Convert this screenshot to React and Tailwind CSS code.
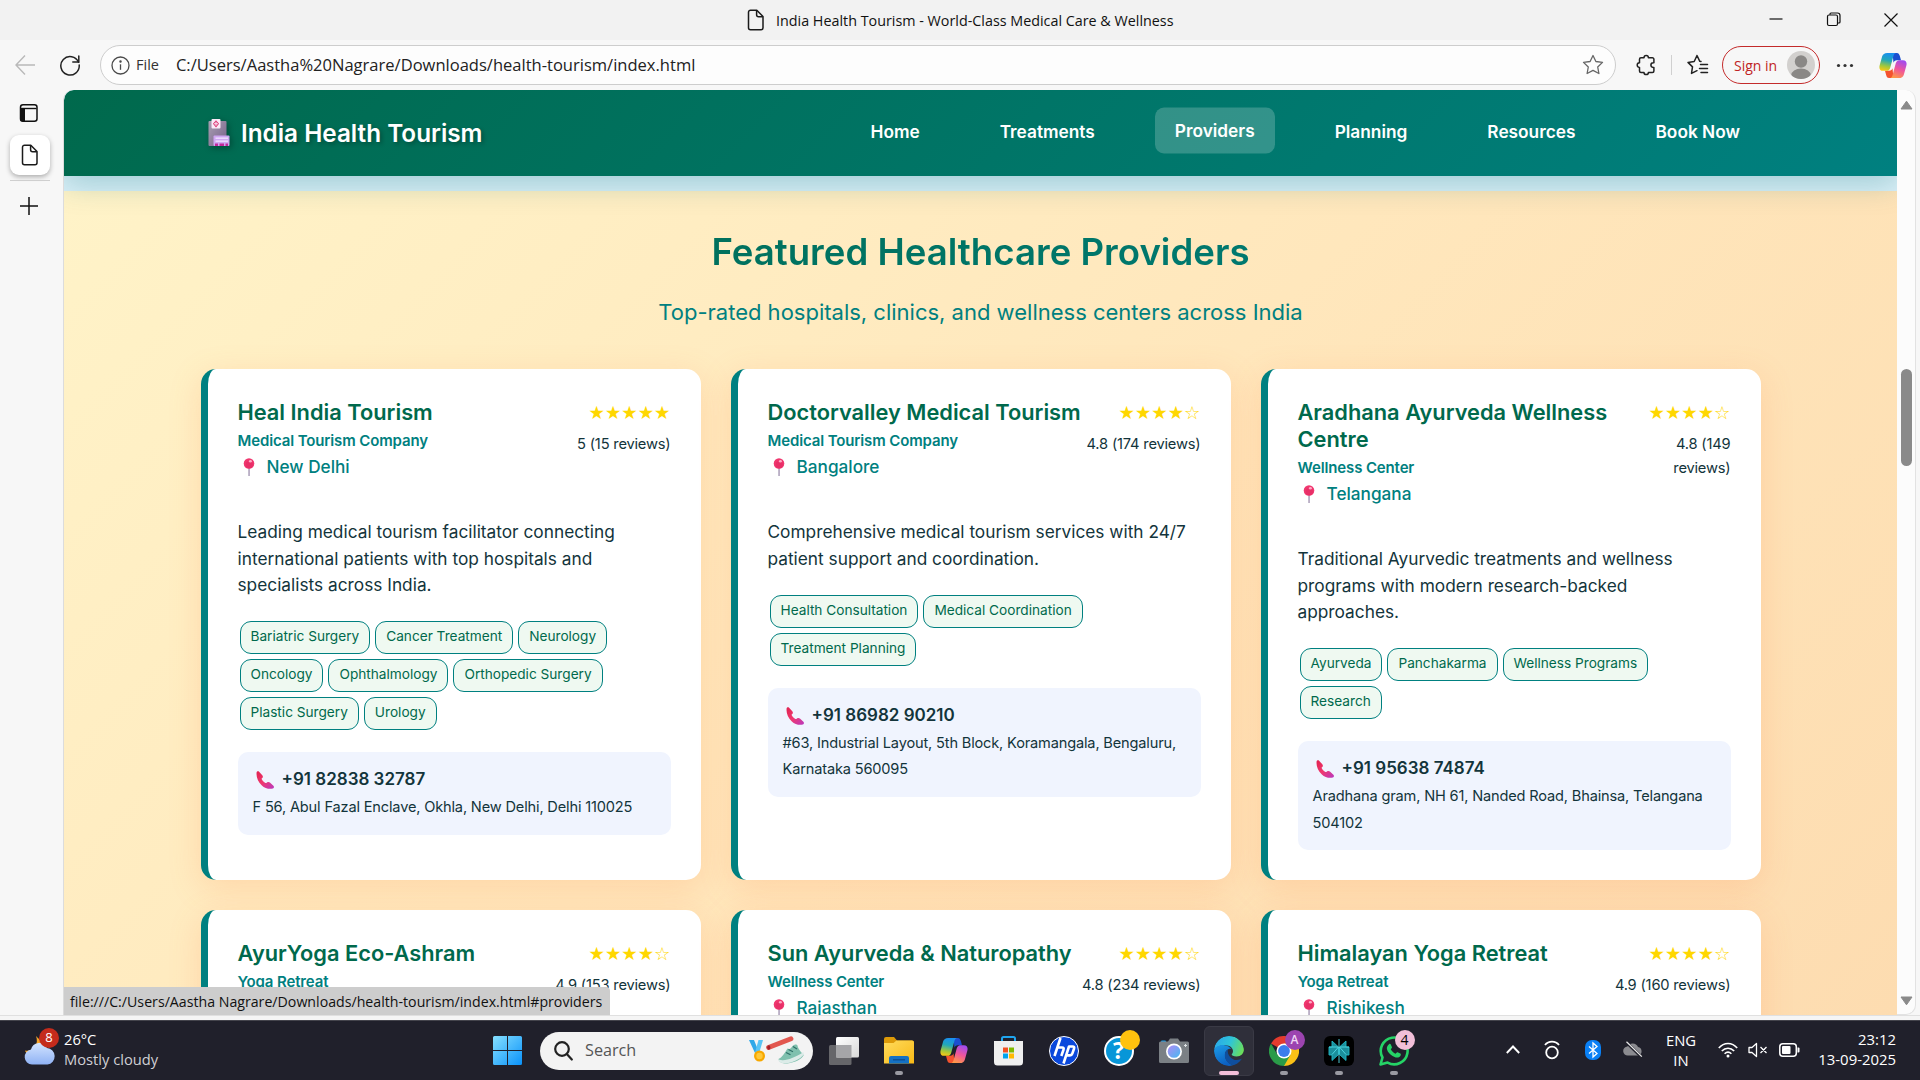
import React from "react";

const INTER = "font-['Inter',sans-serif]";
const UI = "font-['Open_Sans',sans-serif]";

/* ---------- small icons ---------- */

const PageIcon = ({ className = "" }) => (
  <svg className={className} width="18" height="22" viewBox="0 0 18 22" fill="none" stroke="#1b1b1b" strokeWidth="1.5" strokeLinejoin="round">
    <path d="M3.5 1.2h6.3L16 7.6v11.2a2 2 0 0 1-2 2H3.5a2 2 0 0 1-2-2V3.200a2 2 0 0 1 2-2z" />
    <path d="M9.600 1.400v4.400a2 2 0 0 0 2 2h4.200" />
  </svg>
);

const Pin = () => (
  <svg width="12" height="18" viewBox="0 0 12 18" className="ml-[5px] mr-[12px] shrink-0">
    <rect x="5.400" y="9" width="1.300" height="9" fill="#9d8fae" />
    <circle cx="6" cy="5.500" r="5.300" fill="#f0376f" />
    <circle cx="6.200" cy="6.600" r="3.600" fill="#e32a63" opacity=".6" />
    <ellipse cx="7.400" cy="3.200" rx="1.500" ry="1.200" fill="#ffa9c4" />
  </svg>
);

const Phone = () => (
  <svg width="18" height="18" viewBox="0 0 18 18" className="ml-[3px] mr-2 shrink-0">
    <defs>
      <linearGradient id="ph" x1="0" y1="0" x2="1" y2="1">
        <stop offset="0" stopColor="#e0214f" />
        <stop offset=".5" stopColor="#f0386f" />
        <stop offset="1" stopColor="#b838c0" />
      </linearGradient>
    </defs>
    <path d="M.6 1.600C.7.3 2.200-.2 3.100.7L6.300 4.300c.9 1 .7 1.900 0 2.600l-.6.700c-.2.500.3 1.400 1.500 2.700s2.500 2 3.100 1.700l1-.7c.8-.6 1.900-.4 2.600.200l3.500 3.200c.9.900.6 2.300-.6 2.700-2.900 1-7.700.3-11.200-3.200C2 10.900.100 5.800.600 1.600z" fill="url(#ph)" />
  </svg>
);

const Hospital = () => (
  <svg width="23" height="28" viewBox="0 0 23 28" className="mr-[10px] drop-shadow-[2px_2px_3px_rgba(0,0,0,0.3)]">
    <defs>
      <linearGradient id="hb" x1="0" y1="0" x2="1" y2="1">
        <stop offset="0" stopColor="#a9a0b2" />
        <stop offset="1" stopColor="#76608a" />
      </linearGradient>
    </defs>
    <rect x=".5" y="2" width="18" height="25" rx="1" fill="url(#hb)" />
    <rect x="3.500" y="0" width="9" height="9.500" rx="1" fill="#fbeaf8" />
    <path d="M8 1.200l3 3.600-3 3.600-3-3.600z" fill="#d92f6d" />
    <path d="M8 2.800v4M6 4.800h4" stroke="#fbeaf8" strokeWidth="1" />
    <rect x="5.500" y="16.500" width="16" height="10.500" rx="1" fill="#cfa6f2" />
    <rect x="7.500" y="18.500" width="12.500" height="1.300" fill="#f0e4ff" />
    <rect x="7.500" y="21.500" width="12.500" height="1.300" fill="#f0e4ff" />
    <rect x="7" y="24.500" width="3" height="2.500" fill="#c2289a" />
    <rect x="11.500" y="24.500" width="4.500" height="2.500" fill="#c2289a" />
    <rect x="17.500" y="24.500" width="2.500" height="2.500" fill="#c2289a" />
  </svg>
);

const Copilot = ({ id }) => (
  <svg width="28" height="27" viewBox="0 0 29 27">
    <defs>
      <linearGradient id={id + "a"} x1=".5" y1="0" x2=".3" y2="1">
        <stop offset="0" stopColor="#1a8ff0" />
        <stop offset=".4" stopColor="#22a8b8" />
        <stop offset=".75" stopColor="#a3c83a" />
        <stop offset="1" stopColor="#f8c815" />
      </linearGradient>
      <linearGradient id={id + "b"} x1=".7" y1="0" x2=".3" y2="1">
        <stop offset="0" stopColor="#a04bf0" />
        <stop offset=".5" stopColor="#f0569a" />
        <stop offset="1" stopColor="#ff9a45" />
      </linearGradient>
    </defs>
    <path d="M14 .5h4.500c2 0 2.600 1.500 3.100 3.200l1.200 4.300h-4.300c-2 0-3 1-3.500 2.600z" fill="#1c4fd0" />
    <path d="M15 26.500h-4.500c-2 0-2.600-1.500-3.100-3.200L6.200 19h4.300c2 0 3-1 3.500-2.600z" fill="#f4522e" />
    <path d="M8.500.5H18c-1.600 0-2.500 1.200-3 3l-3.300 12c-.6 2.200-1.700 3.500-4 3.500H4.200C1 19-.2 16.500.7 13.200L3.300 4C4 1.800 5.700.5 8.500.5z" fill={`url(#${id}a)`} />
    <path d="M20.500 26.500H11c1.600 0 2.500-1.200 3-3l3.300-12c.6-2.200 1.700-3.500 4-3.500h3.500c3.200 0 4.400 2.500 3.500 5.800L25.700 23c-.7 2.200-2.400 3.500-5.200 3.500z" fill={`url(#${id}b)`} />
  </svg>
);

/* ---------- browser chrome ---------- */

function TitleBar() {
  return (
    <div className={`${UI} flex h-10 shrink-0 items-center bg-[#f2f2f2] text-[14.33px] text-[#111]`}>
      <div className="flex flex-1 items-center pl-[747px]">
        <PageIcon />
        <span className="ml-[11px] whitespace-nowrap pt-[2px]">India Health Tourism - World-Class Medical Care &amp; Wellness</span>
      </div>
      <svg width="151" height="40" viewBox="0 0 151 40" fill="none" stroke="#111" strokeWidth="1.200">
        <path d="M.5 19h13" />
        <rect x="58.500" y="15" width="10" height="10.500" rx="1.500" />
        <path d="M61 14.800V14a1 1 0 0 1 1-1h6.500a2.500 2.500 0 0 1 2.500 2.500V22a1 1 0 0 1-1 1h-1" />
        <path d="M115.500 13.500l13 13M128.500 13.500l-13 13" />
      </svg>
    </div>
  );
}

function Toolbar() {
  return (
    <div className={`${UI} flex h-[50px] shrink-0 items-center bg-[#f7f7f7]`}>
      <svg className="ml-[15px]" width="21" height="22" viewBox="0 0 21 22" fill="none" stroke="#b9b9b9" strokeWidth="1.400">
        <path d="M20 11H1M10 1.500L1 11l9 9.500" />
      </svg>
      <svg className="ml-[23px]" width="22" height="22" viewBox="0 0 22 22" fill="none" stroke="#222" strokeWidth="1.500" strokeLinecap="round">
        <path d="M19.500 8.200A9.200 9.200 0 1 0 20.200 11" />
        <path d="M19.800 2v6h-6" />
      </svg>
      <div className="ml-[19px] flex h-10 w-[1516px] items-center rounded-full border border-[#cdcdcd] bg-[#fdfdfd] pl-[10px] pr-[11px]">
        <svg width="19" height="19" viewBox="0 0 19 19" fill="none" stroke="#4a4a4a" strokeWidth="1.300">
          <circle cx="9.500" cy="9.500" r="8.500" />
          <path d="M9.500 8.300v5.500" />
          <circle cx="9.500" cy="5.600" r=".6" fill="#4a4a4a" />
        </svg>
        <span className="ml-[6px] text-[14.5px] text-[#333]">File</span>
        <span className="ml-[17px] flex-1 whitespace-nowrap text-[16.55px] text-[#222]">C:/Users/Aastha%20Nagrare/Downloads/health-tourism/index.html</span>
        <svg width="22" height="22" viewBox="0 0 22 22" fill="none" stroke="#666" strokeWidth="1.300" strokeLinejoin="round">
          <path d="M11 1.500l2.900 6 6.600.9-4.800 4.600 1.200 6.500-5.900-3.100-5.900 3.100 1.200-6.500L1.500 8.400l6.600-.9z" />
        </svg>
      </div>
      <svg className="ml-5" width="20" height="22" viewBox="0 0 20 22" fill="none" stroke="#222" strokeWidth="1.500" strokeLinejoin="round">
        <path d="M8 3.800a2.200 2.200 0 0 1 4.400 0h4a1.500 1.500 0 0 1 1.500 1.500v3.500h-.7a2.300 2.300 0 0 0 0 4.600h.7v3.500a1.500 1.500 0 0 1-1.500 1.500h-4a2.200 2.200 0 0 1-4.400 0H5a1.500 1.500 0 0 1-1.500-1.500v-3.500a2.300 2.300 0 0 1 0-4.600V5.300A1.500 1.500 0 0 1 5 3.800z" />
      </svg>
      <div className="ml-[15px] h-5 w-px bg-[#d0d0d0]" />
      <svg className="ml-[15px]" width="22" height="22" viewBox="0 0 22 22" fill="none" stroke="#222" strokeWidth="1.500" strokeLinejoin="round" strokeLinecap="round">
        <path d="M14 7.500l-1.200-.2L10 1.500 7.200 7.500l-6.200.9 4.500 4.500-1 6.500L10 16.700" />
        <path d="M13.500 10.500h7M12.500 14.500h8M14 18.500h6.500" />
      </svg>
      <div className="ml-[13px] flex h-[38px] w-[98px] items-center justify-between rounded-full border-[1.500px] border-[#c42b2b] pl-[11px] pr-1">
        <span className="whitespace-nowrap text-[14px] text-[#c02424]">Sign in</span>
        <svg width="28" height="28" viewBox="0 0 28 28">
          <defs>
            <clipPath id="av"><circle cx="14" cy="14" r="14" /></clipPath>
          </defs>
          <g clipPath="url(#av)">
            <rect width="28" height="28" fill="#d2d0ce" />
            <circle cx="14" cy="10.500" r="6.200" fill="#8a8886" />
            <ellipse cx="14" cy="24" rx="9.700" ry="6.500" fill="#8a8886" />
          </g>
        </svg>
      </div>
      <svg className="ml-4" width="18" height="5" viewBox="0 0 18 5" fill="#333">
        <circle cx="2.500" cy="2.500" r="1.600" /><circle cx="9" cy="2.500" r="1.600" /><circle cx="15.500" cy="2.500" r="1.600" />
      </svg>
      <div className="ml-[25px]"><Copilot id="ct" /></div>
    </div>
  );
}

function SideTabs() {
  return (
    <div className="flex w-[63px] shrink-0 flex-col items-start bg-[#f7f7f7] pl-[10px]">
      <svg className="ml-[9px] mt-[14px]" width="20" height="18" viewBox="0 0 20 18">
        <rect x="1.500" y=".8" width="16.500" height="16.400" rx="2.500" fill="none" stroke="#111" strokeWidth="1.500" />
        <path d="M1.500 4.500h16" stroke="#111" strokeWidth="1.400" />
        <path d="M1 4.500h5v13H4a3 3 0 0 1-3-3z" fill="#111" />
      </svg>
      <div className="mt-[13px] flex h-10 w-10 items-center justify-center rounded-[9px] bg-white shadow-[0_2px_5px_rgba(0,0,0,0.3)]"><PageIcon /></div>
      <div className="mt-[5px] h-px w-10 bg-[#cfcfcf]" />
      <svg className="ml-[10px] mt-4" width="18" height="18" viewBox="0 0 18 18" stroke="#111" strokeWidth="1.500">
        <path d="M9 0v18M0 9h18" />
      </svg>
    </div>
  );
}

function Scrollbar() {
  return (
    <div className="flex w-[19px] shrink-0 flex-col items-center rounded-r-[10px] border-b border-r border-[#e2e2e2] bg-[#fcfcfc] pt-[10px]">
      <svg width="13" height="10" viewBox="0 0 13 10"><path d="M6.500 1.200L12 9H1z" fill="#8a8a8a" stroke="#8a8a8a" strokeLinejoin="round" /></svg>
      <div className="mt-[259px] h-[97px] w-[11px] rounded-full bg-[#8a8a8a]" />
      <svg className="mt-[530px]" width="13" height="10" viewBox="0 0 13 10"><path d="M6.500 8.800L12 1H1z" fill="#8a8a8a" stroke="#8a8a8a" strokeLinejoin="round" /></svg>
    </div>
  );
}

/* ---------- site ---------- */

const NAV = ["Home", "Treatments", "Providers", "Planning", "Resources", "Book Now"];

function SiteHeader() {
  return (
    <header className="relative z-10 flex h-[86px] shrink-0 items-center justify-between rounded-tl-[10px] bg-linear-135 from-[#00694c] to-[#008080] pl-[144px] pr-[137px] text-white shadow-[0_8px_30px_rgba(0,110,110,0.26)]">
      <div className="flex items-center">
        <Hospital />
        <span className="text-[24.3px] font-semibold [text-shadow:2px_2px_4px_rgba(0,0,0,0.3)]">India Health Tourism</span>
      </div>
      <nav className="flex gap-10">
        {NAV.map((n) => (
          <a key={n} className={n === "Providers" ? "flex h-[46px] -translate-y-[2.5px] items-center rounded-[9px] bg-white/20 px-5 pb-px text-[17.3px] font-semibold" : "flex h-[46px] -translate-y-px items-center px-5 text-[17.3px] font-semibold"}>{n}</a>
        ))}
      </nav>
    </header>
  );
}

const CARDS = [
  {
    name: "Heal India Tourism", type: "Medical Tourism Company", loc: "New Delhi", stars: "★★★★★", rating: "5 (15 reviews)",
    desc: ["Leading medical tourism facilitator connecting", "international patients with top hospitals and", "specialists across India."],
    tags: ["Bariatric Surgery", "Cancer Treatment", "Neurology", "Oncology", "Ophthalmology", "Orthopedic Surgery", "Plastic Surgery", "Urology"],
    phone: "+91 82838 32787", addr: ["F 56, Abul Fazal Enclave, Okhla, New Delhi, Delhi 110025"],
  },
  {
    name: "Doctorvalley Medical Tourism", type: "Medical Tourism Company", loc: "Bangalore", stars: "★★★★☆", rating: "4.8 (174 reviews)",
    desc: ["Comprehensive medical tourism services with 24/7", "patient support and coordination."],
    tags: ["Health Consultation", "Medical Coordination", "Treatment Planning"],
    phone: "+91 86982 90210", addr: ["#63, Industrial Layout, 5th Block, Koramangala, Bengaluru,", "Karnataka 560095"],
  },
  {
    name: "Aradhana Ayurveda Wellness Centre", type: "Wellness Center", loc: "Telangana", stars: "★★★★☆", rating: "4.8 (149 reviews)", narrow: true,
    desc: ["Traditional Ayurvedic treatments and wellness", "programs with modern research-backed", "approaches."],
    tags: ["Ayurveda", "Panchakarma", "Wellness Programs", "Research"],
    phone: "+91 95638 74874", addr: ["Aradhana gram, NH 61, Nanded Road, Bhainsa, Telangana", "504102"],
  },
  { name: "AyurYoga Eco-Ashram", type: "Yoga Retreat", stars: "★★★★☆", rating: "4.9 (153 reviews)" },
  { name: "Sun Ayurveda & Naturopathy", type: "Wellness Center", loc: "Rajasthan", stars: "★★★★☆", rating: "4.8 (234 reviews)" },
  { name: "Himalayan Yoga Retreat", type: "Yoga Retreat", loc: "Rishikesh", stars: "★★★★☆", rating: "4.9 (160 reviews)" },
];

function Card({ c }) {
  return (
    <article className="h-[511px] rounded-[15px] border-l-[7px] border-[#008080] bg-white px-[30px] pt-[30px] text-[#13343b] shadow-[0_8px_32px_rgba(255,140,80,0.22)]">
      <div className="flex items-start justify-between">
        <div className={c.narrow ? "w-[330px]" : ""}>
          <h3 className="text-[21.8px] font-semibold leading-[27px] text-[#00694c]">{c.name}</h3>
          <div className="pt-[1px] text-[15px] font-semibold leading-[28px] tracking-[-0.13px] text-[#008080]">{c.type}</div>
          {c.loc && (
            <div className="-mt-[1px] flex h-[26px] items-center text-[17.2px] font-medium text-[#008080]">
              <Pin />
              <span>{c.loc}</span>
            </div>
          )}
        </div>
        <div className={c.narrow ? "w-[84px] text-right" : "text-right"}>
          <div className="h-[34px] whitespace-nowrap font-['DejaVu_Sans',sans-serif] text-[18.300px] leading-[28px] text-[#ffd700]">{c.stars}</div>
          <div className="text-[14.7px] leading-[23.500px] tracking-[-0.2px]">{c.rating}</div>
        </div>
      </div>
      {c.desc && (
        <>
          <div className="mt-[39px] text-[17.3px] leading-[26.500px]">
            {c.desc.map((d) => <div key={d} className="whitespace-nowrap">{d}</div>)}
          </div>
          <div className="mt-[22.500px] flex flex-wrap gap-[5px] pl-[2px] pr-[45px]">
            {c.tags.map((t) => (
              <span key={t} className="flex h-[33px] items-center rounded-[11px] border border-[#008080] bg-[#eff9f1] px-[10px] pb-[2px] text-[13.650px] text-[#00694c]">{t}</span>
            ))}
          </div>
          <div className="mt-[22px] rounded-[10px] bg-[#f0f4fe] px-[15px] py-[14px]">
            <div className="flex h-[28px] items-center text-[17px] font-semibold">
              <Phone />
              <span>{c.phone}</span>
            </div>
            {c.addr.map((a) => <div key={a} className="whitespace-nowrap text-[14.580px] leading-[26.600px] tracking-[-0.16px]">{a}</div>)}
          </div>
        </>
      )}
    </article>
  );
}

function Site() {
  return (
    <div className={`${INTER} relative flex h-[925px] w-[1834px] shrink-0 flex-col overflow-hidden border-l border-[#dcdcdc] rounded-tl-[10px] bg-[#d9eff8]`}>
      <SiteHeader />
      <section className="mt-[15px] flex h-[824px] shrink-0 flex-col items-center bg-linear-135 from-[#fff3c8] via-[#ffe7bc] to-[#fddcb0] pt-[38px]">
        <h2 className="bg-linear-135 from-[#00694c] to-[#008080] bg-clip-text px-[510px] text-[36.600px] font-semibold leading-[46px] text-transparent">Featured Healthcare Providers</h2>
        <p className="mt-[21px] text-[22px] leading-[33px] text-[#008080]">Top-rated hospitals, clinics, and wellness centers across India</p>
        <div className="mt-10 grid w-[1560px] grid-cols-[500px_500px_500px] gap-[30px]">
          {CARDS.map((c) => <Card key={c.name} c={c} />)}
        </div>
      </section>
      <div className={`${UI} absolute bottom-0 left-0 z-20 flex h-7 w-[546px] items-center rounded-tr-[4px] bg-[#cdcdcd] pl-[6px] pt-[2px] text-[14.180px] text-[#111]`}>
        <span className="whitespace-nowrap">file:///C:/Users/Aastha Nagrare/Downloads/health-tourism/index.html#providers</span>
      </div>
    </div>
  );
}

/* ---------- taskbar ---------- */

const Badge = ({ className, children }) => (
  <span className={`absolute flex items-center justify-center rounded-full ${className}`}>{children}</span>
);

function AppCell({ children, dot, active }) {
  return (
    <div className="flex h-[60px] w-[55px] items-center justify-center">
      <div className={active ? "relative flex h-[50px] w-[50px] items-center justify-center rounded-md border border-[#3a3a45] bg-[#2f2f3a]" : "relative flex h-[50px] w-[50px] items-center justify-center"}>
        {children}
        {dot && <span className="absolute bottom-[1px] h-1 w-2 rounded-full bg-[#9a9aa2]" />}
        {active && <span className="absolute bottom-0 h-1 w-5 rounded-full bg-[#f2bfd9]" />}
      </div>
    </div>
  );
}

function Taskbar() {
  return (
    <div className={`${UI} flex h-[60px] shrink-0 items-center border-t border-[#44444c] bg-[#20202b] text-white`}>
      <div className="relative ml-[24px] h-[48px] w-[36px]">
        <svg className="mt-[8px]" width="34" height="38" viewBox="0 0 34 38">
          <defs>
            <linearGradient id="cl" x1="0" y1="0" x2="0" y2="1">
              <stop offset="0" stopColor="#d3e4ff" />
              <stop offset="1" stopColor="#8fb2f5" />
            </linearGradient>
          </defs>
          <path d="M12 1c3 8-2 16-11 14.500C3 21 9 23 14 21s8-6 7-11z" fill="#f4a52a" />
          <path d="M8 35.500a7.500 7.500 0 0 1-1-14.900 8.500 8.500 0 0 1 16-1.600 8.300 8.300 0 0 1 .5 16.500z" transform="translate(0 -6)" fill="url(#cl)" />
        </svg>
        <Badge className="left-[15px] top-[1px] h-5 w-5 bg-[#c42b1c] text-[13px] leading-none">8</Badge>
      </div>
      <div className="ml-[4px] w-[429px] pb-[3px] text-[14.7px] leading-[20px]">
        <div>26°C</div>
        <div className="text-[#cfcfd4]">Mostly cloudy</div>
      </div>
      <svg width="29" height="29" viewBox="0 0 29 29">
        <defs>
          <linearGradient id="wn" x1="0" y1="0" x2="1" y2="1">
            <stop offset="0" stopColor="#86e0ff" />
            <stop offset="1" stopColor="#0a92fa" />
          </linearGradient>
        </defs>
        <path d="M1.500 0H14v14H0V1.500A1.500 1.500 0 0 1 1.500 0zM15 0h12.500A1.500 1.500 0 0 1 29 1.500V14H15zM0 15h14v14H1.500A1.500 1.500 0 0 1 0 27.500zM15 15h14v12.500a1.500 1.500 0 0 1-1.500 1.500H15z" fill="url(#wn)" />
      </svg>
      <div className="ml-[18px] flex h-[38px] w-[273px] items-center rounded-full bg-[#f3f3f3] pl-[14px] pr-2">
        <svg width="19" height="20" viewBox="0 0 19 20" fill="none" stroke="#222" strokeWidth="2.200">
          <circle cx="8" cy="8" r="6.800" />
          <path d="M12.800 13l5 5.500" strokeLinecap="round" />
        </svg>
        <span className="ml-3 flex-1 text-[16.2px] text-[#555]">Search</span>
        <svg width="56" height="30" viewBox="0 0 56 30">
          <path d="M0 4h5l4 10-3 3z" fill="#2fa8e8" /><path d="M14 4H9.500L6 16.500l4 1z" fill="#58c4f5" />
          <circle cx="10.500" cy="20" r="5.500" fill="#f7a800" /><circle cx="10.500" cy="20" r="3.200" fill="#ffc93a" />
          <path d="M19.500 11.500L42 2.800" stroke="#e2574f" strokeWidth="4.800" strokeLinecap="round" /><ellipse cx="19.800" cy="11.500" rx="1.600" ry="2.300" fill="#a3222b" />
          <path d="M29.500 23c3.500-1.500 6-5.500 9-10.500 1.500.8 2.500.5 3.500-.5 1.300-1.200 2-3.500 5-3.500 1.200 0 1.800 1 1.800 2.500 1.200 3 3.200 5 6 8-2 4-8.500 7.500-16.500 8.500-4 .3-8-.5-8.800-4.500z" fill="#7fc0ae" />
          <path d="M29.500 23.500c4 1.500 9 .5 13.500-1.500 5-2 9-4 11.300-6l.5 2.500c-4 5-11 8.300-18.300 8.800-4 .2-7.300-1-7-3.800z" fill="#dcebe8" />
          <path d="M37 16.500l4.500 2.300M39.500 13.500l4.500 2.300M44 10.500l4 2.500" stroke="#2f6f68" strokeWidth="1.200" />
        </svg>
      </div>
      <div className="ml-[3px] flex">
        <AppCell>
          <svg width="30" height="28" viewBox="0 0 30 28">
            <defs><linearGradient id="tv" x1="0" y1="0" x2="1" y2="1"><stop offset="0" stopColor="#fff" /><stop offset="1" stopColor="#d8d8d8" /></linearGradient></defs>
            <rect x="0" y="8" width="22.500" height="20" rx="1.500" fill="#66666a" />
            <rect x="7" y="0" width="23" height="20.500" rx="1.500" fill="url(#tv)" />
            <rect x="7" y="8" width="15.500" height="12.500" fill="#a5a5a8" />
          </svg>
        </AppCell>
        <AppCell dot>
          <svg width="30" height="27" viewBox="0 0 30 27">
            <defs><linearGradient id="fd" x1="0" y1="0" x2="1" y2="1"><stop offset="0" stopColor="#ffdb5c" /><stop offset="1" stopColor="#f8b916" /></linearGradient></defs>
            <path d="M0 2a2 2 0 0 1 2-2h8l3 3.500h15a2 2 0 0 1 2 2V10H0z" fill="#dd9a08" />
            <path d="M0 6h9.500l3-2.500H28a2 2 0 0 1 2 2V26.500H0z" fill="url(#fd)" />
            <path d="M5 26.500V21a2 2 0 0 1 2-2h16a2 2 0 0 1 2 2v5.500z" fill="#1471c4" />
            <path d="M9 22.800h12" stroke="#0a4a8c" strokeWidth="1.200" />
          </svg>
        </AppCell>
        <AppCell><Copilot id="cb" /></AppCell>
        <AppCell>
          <svg width="29" height="30" viewBox="0 0 29 30">
            <path d="M8 6V2.500A1.500 1.500 0 0 1 9.500 1h10A1.500 1.500 0 0 1 21 2.500V6" fill="none" stroke="#1fa5ef" strokeWidth="2" />
            <path d="M0 5h29v21a3.500 3.500 0 0 1-3.500 3.500h-22A3.500 3.500 0 0 1 0 26z" fill="#efefef" />
            <path d="M9 11.500h5v5H9z" fill="#f25022" /><path d="M15 11.500h5v5h-5z" fill="#7fba00" /><path d="M9 17.500h5v5H9z" fill="#00a4ef" /><path d="M15 17.500h5v5h-5z" fill="#ffb900" />
          </svg>
        </AppCell>
        <AppCell>
          <div className="flex h-[30px] w-[30px] items-center justify-center rounded-full border-[1.500px] border-white bg-[#0a48dc]">
            <svg width="24" height="27" viewBox="0 0 24 27" fill="none" stroke="#fff" strokeWidth="2.600" strokeLinejoin="round">
              <path d="M8.500 1L2.500 19M5.500 10.500h4.500c1.500 0 2 .8 1.500 2.200L9.300 19" />
              <path d="M11.500 26.500L17 9.500h3.500c1.500 0 2 .8 1.500 2.200l-1.700 5c-.4 1.200-1.200 1.700-2.400 1.700h-3" />
            </svg>
          </div>
        </AppCell>
        <AppCell>
          <div className="flex h-[30px] w-[30px] items-center justify-center rounded-full border-2 border-white bg-[#0796d8] pb-px text-[23px] font-bold leading-none">?</div>
          <Badge className="left-[26px] top-[4px] h-5 w-5 bg-[#ffc20e]" />
        </AppCell>
        <AppCell>
          <svg width="30" height="25" viewBox="0 0 30 25">
            <defs><linearGradient id="cm" x1="0" y1="0" x2="1" y2="1"><stop offset="0" stopColor="#b08af5" /><stop offset="1" stopColor="#46b9f0" /></linearGradient></defs>
            <rect x="2" y="2.500" width="5" height="3" rx="1" fill="#1b9de8" />
            <path d="M9 3.500L11 .5h8l2 3h7.500A1.500 1.500 0 0 1 30 5v18.500a1.500 1.500 0 0 1-1.500 1.500h-27A1.500 1.500 0 0 1 0 23.500V5a1.500 1.500 0 0 1 1.500-1.500z" fill="#7b8085" />
            <circle cx="15" cy="13.500" r="8" fill="#fff" /><circle cx="15" cy="13.500" r="6.300" fill="url(#cm)" />
            <path d="M26.500 6v3M25 7.500h3" stroke="#dfe3e6" />
          </svg>
        </AppCell>
        <AppCell active>
          <svg width="30" height="30" viewBox="0 0 30 30">
            <defs>
              <linearGradient id="e1" x1="0" y1=".3" x2="1" y2=".6"><stop offset="0" stopColor="#2aa8ea" /><stop offset=".5" stopColor="#2fc4d8" /><stop offset="1" stopColor="#6bde5a" /></linearGradient>
              <linearGradient id="e2" x1="0" y1="0" x2=".4" y2="1"><stop offset="0" stopColor="#1c9de8" /><stop offset="1" stopColor="#0c5fc0" /></linearGradient>
              <clipPath id="ec"><circle cx="15" cy="15" r="15" /></clipPath>
            </defs>
            <g clipPath="url(#ec)">
              <path d="M0 14C.5 5.500 7 0 15 0c9 0 15 6.500 15 13 0 4.500-3 7.500-7.500 7.500-3 0-4.800-.9-4.800-1.900 0-.8 1.300-1.200 1.300-3.600 0-3-3-5.800-7.500-5.800C6.500 9.200 2 10.500 0 14z" fill="url(#e1)" />
              <path d="M0 14.500c1-3.500 5.500-6 10.500-5.300 3 .4 5.500 1.800 7 3.800-3-1-6.500 1.500-6.500 6 0 5.500 4.500 10 9.500 10.200-1.500.6-3.500 1-5.500.8C6.500 30 0 23 0 14.500z" fill="url(#e2)" />
              <path d="M10.800 19c0-2.500 1.200-4.700 3-5.600-.8 6.100 4.200 10.600 8.700 10.600 2.400 0 4-.7 5-1.200.5-.2.800.1.500.6-1.800 3.100-4.600 5.200-7.700 5.900-5.500-.3-9.500-5-9.500-10.300z" fill="#0f4f9e" />
            </g>
          </svg>
        </AppCell>
        <AppCell dot>
          <svg width="30" height="30" viewBox="0 0 30 30">
            <path d="M15 15L2 7.500A15 15 0 0 1 28 7.500z" fill="#e33b2e" />
            <path d="M15 15L15 30A15 15 0 0 0 28 7.500H15z" fill="#fbc116" />
            <path d="M15 15L21.500 18.800 15 30A15 15 0 0 1 2 7.500L8.500 18.800z" fill="#2a9b48" />
            <circle cx="15" cy="15" r="7.500" fill="#fff" /><circle cx="15" cy="15" r="5.900" fill="#3b7ded" />
          </svg>
          <Badge className="left-[26px] top-[4px] h-5 w-5 bg-[#9c44b0] text-[12px] font-semibold text-[#f0d8f5]">A</Badge>
        </AppCell>
        <AppCell dot>
          <div className="flex h-[30px] w-[30px] items-center justify-center rounded-[6px] bg-black">
            <svg width="22" height="24" viewBox="0 0 22 24" fill="#1b8f9c" stroke="#1fb8c6" strokeWidth=".9">
              <path d="M10.500 8L4 2v6H1v8h3v5.500l6.500-6zM11.500 8L18 2v6h3v8h-3v5.500l-6.500-6z" />
              <path d="M11 0v24M1 8l9.500 0L4 15.500M21 8l-9.500 0L18 15.500" fill="none" stroke="#53dbe6" />
            </svg>
          </div>
        </AppCell>
        <AppCell dot>
          <svg width="30" height="30" viewBox="0 0 30 30">
            <path d="M1.500 28.500l2-7A13.400 13.400 0 1 1 8.600 26.600z" fill="none" stroke="#25d366" strokeWidth="2.600" strokeLinejoin="round" />
            <path d="M10 8.300c.5-.6 1.400-.6 1.800.2l1.100 2.600c.2.600-.1 1.100-1.100 2.200.8 1.800 2.600 3.500 4.900 4.500.9-1.200 1.300-1.700 1.900-1.500l2.700 1.300c.6.300.6.900.4 1.600-.6 2-3 2.800-5 2.200-4.500-1.300-8-4.700-8.800-8.300-.3-1.800.6-3.500 2.100-4.800z" fill="#25d366" />
          </svg>
          <Badge className="left-[26px] top-[4px] h-5 w-5 bg-[#f2bfd9] text-[14px] leading-none text-black">4</Badge>
        </AppCell>
      </div>
      <div className="flex flex-1 items-center pb-[2px] pr-6">
        <svg className="ml-[85px]" width="14" height="9" viewBox="0 0 14 9" fill="none" stroke="#fff" strokeWidth="1.900"><path d="M.8 8L7 1.500 13.200 8" /></svg>
        <svg className="ml-[23px]" width="18" height="20" viewBox="0 0 18 20" fill="none" stroke="#fff" strokeWidth="1.800"><circle cx="9" cy="12.500" r="5.800" /><path d="M2 5C5.500.5 12.500.5 16 5" /></svg>
        <svg className="ml-[24px]" width="16" height="20" viewBox="0 0 16 20"><rect width="16" height="20" rx="7" fill="#0a80f5" /><path d="M4 6.500l8 7L8 17V3l4 3.500-8 7" fill="none" stroke="#fff" strokeWidth="1.300" /></svg>
        <svg className="ml-[22px]" width="20" height="17" viewBox="0 0 20 17"><path d="M5 14.500a4.500 4.500 0 0 1-.6-9A6 6 0 0 1 15 6a4.400 4.400 0 0 1 .5 8.500z" fill="#8b8b90" /><path d="M3 1l15.500 15" stroke="#20202b" strokeWidth="3" /><path d="M3.500 .8L18.800 15.600" stroke="#e8e8e8" strokeWidth="1.300" /></svg>
        <div className="ml-[10px] w-[56px] text-center text-[14.800px] leading-[20px]">
          <div>ENG</div>
          <div>IN</div>
        </div>
        <svg className="ml-[9px]" width="20" height="16" viewBox="0 0 20 16" fill="none" stroke="#fff" strokeWidth="1.600"><path d="M.8 6C6 .0 14 .0 19.200 6M3.800 9c3.500-3.700 8.900-3.700 12.400 0M6.600 11.800c2-2 4.800-2 6.800 0" /><circle cx="10" cy="14" r="1.500" fill="#fff" stroke="none" /></svg>
        <svg className="ml-[10px]" width="20" height="16" viewBox="0 0 20 16" fill="none" stroke="#fff" strokeWidth="1.300" strokeLinejoin="round"><path d="M1 5.500v5h3l4.500 4V1.500L4 5.500zM12.500 5l6 6M18.500 5l-6 6" /></svg>
        <svg className="ml-[11px]" width="21" height="14" viewBox="0 0 21 14"><rect x=".8" y=".8" width="16.500" height="12.400" rx="3" fill="none" stroke="#fff" strokeWidth="1.500" /><rect x="3" y="3" width="8.500" height="8" rx="1" fill="#fff" /><path d="M18.500 4.500h1a1 1 0 0 1 1 1v3a1 1 0 0 1-1 1h-1z" fill="#fff" /></svg>
        <div className="flex-1 pb-px text-right text-[14.900px] leading-[20px]">
          <div>23:12</div>
          <div>13-09-2025</div>
        </div>
      </div>
    </div>
  );
}

export default function App() {
  return (
    <div className="flex h-[1080px] w-[1920px] flex-col overflow-hidden bg-[#f7f7f7]">
      <TitleBar />
      <Toolbar />
      <div className="flex h-[925px] shrink-0">
        <SideTabs />
        <Site />
        <Scrollbar />
      </div>
      <div className="h-[5px] shrink-0 border-t border-[#e0e0e0] bg-[#f5f5f5]" />
      <Taskbar />
    </div>
  );
}
